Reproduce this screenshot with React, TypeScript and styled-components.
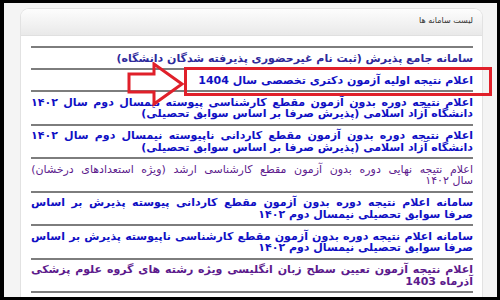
import React from 'react';
import styled, {createGlobalStyle} from 'styled-components';

const GlobalStyle = createGlobalStyle`
    html, body {
        margin: 0;
        padding: 0;
        background: #000;
    }
`;

type Tone = 'blue' | 'navy' | 'purple';

const Frame = styled.div`
    position: relative;
    width: 500px;
    height: 300px;
    box-sizing: border-box;
    border-style: solid;
    border-color: #000;
    border-width: 3px 3px 3px 4px;
    background-color: #f4f4f4;
    padding: 5px 14px 0 16px;
    overflow: hidden;
`;

const Panel = styled.div`
    height: 100%;
    display: flex;
    flex-direction: column;
    background: #fff;
    border: 1px solid #e2e2e2;
    border-bottom: none;
    border-radius: 9px 9px 0 0;
    direction: rtl;
`;

const PanelHeader = styled.div`
    height: 27px;
    flex-shrink: 0;
    padding: 7px 9px 0;
    box-sizing: border-box;
    border-radius: 8px 8px 0 0;
    background: linear-gradient(#fdfdfd, #e9e9e9);
    border-bottom: 1px solid #e0e0e0;
    font-family: 'DejaVu Sans', sans-serif;
    font-size: 8px;
    color: #333;
`;

const List = styled.div`
    padding: 10px 9px 0 10px;
    display: flex;
    flex-direction: column;
`;

const Row = styled.div<{$tone: Tone; $light?: boolean}>`
    border-top: 2px solid #7d7d7d;
    padding: 4.5px 0 4px;
    font-family: 'DejaVu Sans', sans-serif;
    font-weight: ${p => (p.$light ? 'normal' : 'bold')};
    font-size: 11px;
    line-height: 11.5px;
    text-align: right;
    color: ${p => (p.$tone === 'blue' ? '#1010c4' : p.$tone === 'navy' ? '#2e2a9c' : '#5c1a8c')};
`;

const Line = styled.div`
    white-space: nowrap;
`;

// a line that is followed by another one is spread over the full width
const FullLine = styled.div`
    display: flex;
    justify-content: space-between;
    white-space: nowrap;
`;

const Highlight = styled.div`
    position: absolute;
    left: 180px;
    top: 64px;
    width: 308px;
    height: 29px;
    box-sizing: border-box;
    border: 3px solid #e0202a;
`;

const Arrow = styled.svg`
    position: absolute;
    left: 123px;
    top: 59px;
`;

const items: {tone: Tone; light?: boolean; lines: string[]}[] = [
    {tone: 'navy', lines: ['سامانه جامع پذیرش (ثبت نام غیرحضوری پذیرفته شدگان دانشگاه)']},
    {tone: 'blue', lines: ['اعلام نتیجه اولیه آزمون دکتری تخصصی سال 1404']},
    {
        tone: 'blue',
        lines: [
            'اعلام نتیجه دوره بدون آزمون مقطع کارشناسی پیوسته نیمسال دوم سال ۱۴۰۲',
            'دانشگاه آزاد اسلامی (پذیرش صرفا بر اساس سوابق تحصیلی)',
        ],
    },
    {
        tone: 'blue',
        lines: [
            'اعلام نتیجه دوره بدون آزمون مقطع کاردانی ناپیوسته نیمسال دوم سال ۱۴۰۲',
            'دانشگاه آزاد اسلامی (پذیرش صرفا بر اساس سوابق تحصیلی)',
        ],
    },
    {
        tone: 'purple',
        light: true,
        lines: ['اعلام نتیجه نهایی دوره بدون آزمون مقطع کارشناسی ارشد (ویژه استعدادهای درخشان)', 'سال ۱۴۰۲'],
    },
    {
        tone: 'blue',
        lines: [
            'سامانه اعلام نتیجه دوره بدون آزمون مقطع کاردانی پیوسته پذیرش بر اساس',
            'صرفا سوابق تحصیلی نیمسال دوم ۱۴۰۲',
        ],
    },
    {
        tone: 'blue',
        lines: [
            'سامانه اعلام نتیجه دوره بدون آزمون مقطع کارشناسی ناپیوسته پذیرش بر اساس',
            'صرفا سوابق تحصیلی نیمسال دوم ۱۴۰۲',
        ],
    },
    {
        tone: 'purple',
        lines: ['اعلام نتیجه آزمون تعیین سطح زبان انگلیسی ویژه رشته های گروه علوم پزشکی', 'آذرماه 1403'],
    },
];

const App = () => {
    return (
        <>
            <GlobalStyle />
            <Frame>
                <Panel>
                    <PanelHeader>لیست سامانه ها</PanelHeader>
                    <List>
                        {items.map((item, i) => (
                            <Row key={i} $tone={item.tone} $light={item.light}>
                                {item.lines.map((l, j) =>
                                    j < item.lines.length - 1 ? (
                                        <FullLine key={j}>
                                            {l.split(' ').map((w, k) => (
                                                <span key={k}>{w}</span>
                                            ))}
                                        </FullLine>
                                    ) : (
                                        <Line key={j}>{l}</Line>
                                    )
                                )}
                            </Row>
                        ))}
                        <Row $tone="blue" />
                    </List>
                </Panel>
                <Highlight />
                <Arrow width="60" height="46" viewBox="0 0 60 46">
                    <path
                        d="M2 12 H27 V2 L55 22 L27 42 V30 H2 Z"
                        fill="none"
                        stroke="#e0202a"
                        strokeWidth="3"
                        strokeLinejoin="miter"
                    />
                </Arrow>
            </Frame>
        </>
    );
};

export default App;
